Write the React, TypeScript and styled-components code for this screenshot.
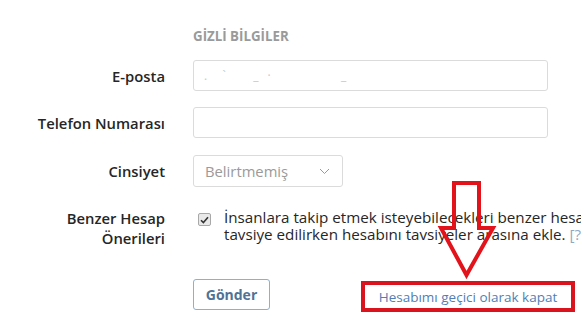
import React from "react";
import styled, { createGlobalStyle } from "styled-components";

const Global = createGlobalStyle`
  html, body { margin: 0; padding: 0; background: #fff; overflow: hidden; }
  body { font-family: "Open Sans", "Liberation Sans", sans-serif; color: #262626; }
  #root { width: 581px; height: 317px; overflow: hidden; position: relative; }
`;

const Page = styled.div`
  position: relative;
  width: 581px;
  height: 317px;
  padding-top: 28px;
  box-sizing: border-box;
  display: flex;
  flex-direction: column;
`;

const Row = styled.div<{ $gap: number; $top?: boolean }>`
  display: flex;
  align-items: ${(p) => (p.$top ? "flex-start" : "center")};
  gap: 28px;
  margin-bottom: ${(p) => p.$gap}px;
`;

const Label = styled.label`
  width: 165px;
  flex-shrink: 0;
  text-align: right;
  font-size: 14.8px;
  font-weight: 600;
  line-height: 20px;
  color: #262626;
`;

const Heading = styled.div`
  font-size: 13.3px;
  font-weight: 700;
  color: #9a9a9a;
  line-height: 16px;
`;

const Input = styled.div`
  width: 355px;
  height: 31px;
  border: 1px solid #dbdbdb;
  border-radius: 3px;
  box-sizing: border-box;
  padding: 0 10px;
  display: flex;
  align-items: center;
  font-size: 12px;
  color: #c8c8c8;
  letter-spacing: 3px;
  white-space: pre;
`;

const Select = styled.div`
  width: 150px;
  height: 32px;
  border: 1px solid #dbdbdb;
  border-radius: 3px;
  box-sizing: border-box;
  padding: 0 12px 0 11px;
  display: flex;
  align-items: center;
  justify-content: space-between;
  font-size: 14.8px;
  color: #9a9a9a;
`;

const Check = styled.div`
  display: flex;
  align-items: flex-start;
  gap: 13px;
  padding-left: 5px;
  white-space: nowrap;
  margin-top: 1px;
`;

const Box = styled.span`
  width: 11px;
  height: 11px;
  margin-top: 4px;
  border: 1px solid #a8a8a8;
  border-radius: 2px;
  background: #e9e9e9;
  display: flex;
  align-items: center;
  justify-content: center;
  flex-shrink: 0;
`;

const CheckText = styled.div`
  font-size: 15.2px;
  line-height: 17px;
  color: #262626;
`;

const Help = styled.span`
  color: #8fa8c4;
`;

const Actions = styled.div`
  display: flex;
  align-items: flex-start;
  gap: 91px;
`;

const Button = styled.button`
  width: 77px;
  height: 31px;
  border: 1px solid #8eb0c9;
  border-radius: 3px;
  background: #fff;
  color: #4f7396;
  font-family: inherit;
  font-size: 14px;
  font-weight: 700;
  padding: 0;
`;

const Annot = styled.div`
  border: 4px solid #d9141e;
  width: 214px;
  height: 31px;
  box-sizing: border-box;
  display: flex;
  align-items: center;
  justify-content: center;
  margin-top: 2px;
`;

const Link = styled.a`
  color: #4f7fb5;
  font-size: 13.5px;
  text-decoration: none;
`;

const Arrow = styled.svg`
  position: absolute;
  left: 436px;
  top: 180px;
`;

export default function App() {
  return (
    <Page>
      <Global />
      <Row $gap={16}>
        <Label />
        <Heading>GİZLİ BİLGİLER</Heading>
      </Row>

      <Row $gap={16}>
        <Label>E-posta</Label>
        <Input>{".  `    _ ·           _"}</Input>
      </Row>

      <Row $gap={17}>
        <Label>Telefon Numarası</Label>
        <Input />
      </Row>

      <Row $gap={21}>
        <Label>Cinsiyet</Label>
        <Select>
          <span>Belirtmemiş</span>
          <svg width="11" height="7" viewBox="0 0 11 7">
            <path d="M1 1 L5.5 5.5 L10 1" fill="none" stroke="#9a9a9a" strokeWidth="1" />
          </svg>
        </Select>
      </Row>

      <Row $gap={31} $top>
        <Label>
          Benzer Hesap
          <br />
          Önerileri
        </Label>
        <Check>
          <Box>
            <svg width="9" height="8" viewBox="0 0 9 8">
              <path d="M1 4.2 L3.4 6.6 L8 1.2" fill="none" stroke="#333" strokeWidth="1.6" />
            </svg>
          </Box>
          <CheckText>
            İnsanlara takip etmek isteyebilecekleri benzer hesaplar
            <br />
            tavsiye edilirken hesabını tavsiyeler arasına ekle. <Help>[?]</Help>
          </CheckText>
        </Check>
      </Row>

      <Row $gap={0} $top>
        <Label />
        <Actions>
          <Button>Gönder</Button>
          <Annot>
            <Link href="#">Hesabımı geçici olarak kapat</Link>
          </Annot>
        </Actions>
      </Row>

      <Arrow width="62" height="100" viewBox="0 0 62 100">
        <path
          d="M18 3 L43 3 L43 48 L57 48 L30.5 95 L5 48 L18 48 Z"
          fill="none"
          stroke="#e3131c"
          strokeWidth="4"
          strokeLinejoin="miter"
        />
      </Arrow>
    </Page>
  );
}
